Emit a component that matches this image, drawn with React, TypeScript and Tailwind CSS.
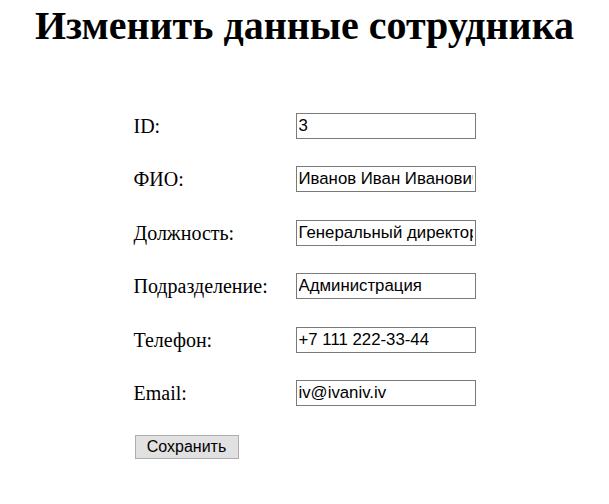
import { useState } from "react";

const fields = [
  { key: "id", label: "ID:", value: "3" },
  { key: "fio", label: "ФИО:", value: "Иванов Иван Иванович" },
  { key: "position", label: "Должность:", value: "Генеральный директор" },
  { key: "department", label: "Подразделение:", value: "Администрация" },
  { key: "phone", label: "Телефон:", value: "+7 111 222-33-44" },
  { key: "email", label: "Email:", value: "iv@ivaniv.iv" },
];

const App = () => {
  const [values, setValues] = useState<Record<string, string>>(
    Object.fromEntries(fields.map((f) => [f.key, f.value]))
  );

  return (
    <div className="min-h-[504px] w-full bg-white text-black font-['Liberation_Serif',serif]">
      <h1 className="pt-[3px] text-center text-[40px] font-bold leading-[46px]">
        Изменить данные сотрудника
      </h1>
      <form
        className="mx-auto mt-[64px] w-[342px]"
        onSubmit={(e) => e.preventDefault()}
      >
        <div className="grid grid-cols-[162px_180px] gap-y-[27.4px]">
          {fields.map((f) => (
            <div key={f.key} className="contents">
              <label className="flex h-[26px] items-center text-[20px]">
                {f.label}
              </label>
              <input
                className="h-[26px] w-[180px] border border-[#7a7a7a] px-[2px] font-['Liberation_Sans',sans-serif] text-[16.8px] text-black outline-none"
                value={values[f.key]}
                onChange={(e) =>
                  setValues((prev) => ({ ...prev, [f.key]: e.target.value }))
                }
              />
            </div>
          ))}
        </div>
        <button
          type="submit"
          className="ml-[1px] mt-[29px] h-[24px] w-[104px] border border-[#adadad] bg-[#e1e1e1] font-['Liberation_Sans',sans-serif] text-[16px] leading-none text-black"
        >
          Сохранить
        </button>
      </form>
    </div>
  );
};

export default App;
